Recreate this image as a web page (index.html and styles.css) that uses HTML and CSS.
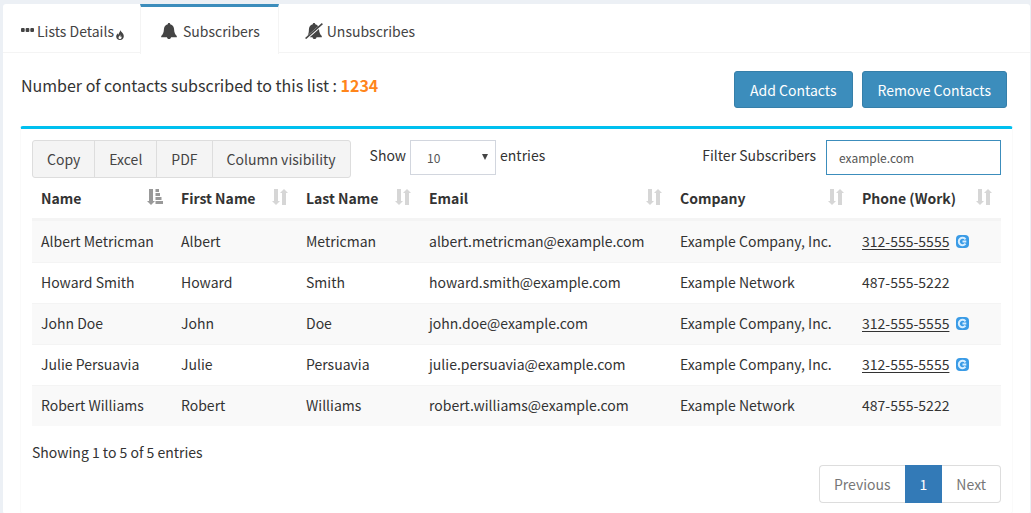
FILE: index.html
```
<!DOCTYPE html>
<html lang="en">
<head>
    <meta charset="utf-8">
    <title>Subscribers</title>
    <link rel="stylesheet" href="styles.css">
</head>
<body>
    <!-- Shared icons -->
    <svg class="sprite" aria-hidden="true">
        <symbol id="sort" viewBox="0 0 16 16">
            <path d="M2 0h4v12h2l-4 4-4-4h2zM10 16V4H8l4-4 4 4h-2v12z"/>
        </symbol>
        <symbol id="sort-asc" viewBox="0 0 16 16">
            <path d="M2 0h4v12h2l-4 4-4-4h2zM8.500 0h3.500v3H8.500zM8.500 4H13v3H8.500zM8.500 8h6v3h-6zM8.500 12H16v3H8.500z"/>
        </symbol>
        <symbol id="call" viewBox="0 0 13 13">
            <rect width="13" height="13" rx="4" fill="#3a9be6"/>
            <path d="M9.500 4.300A3.700 3.700 0 1 0 9.500 8.700M10.300 6.500H6.500" fill="none" stroke="#d9efff" stroke-width="2"/>
        </symbol>
    </svg>

    <div class="nav-tabs-custom">
        <nav class="nav-tabs">
            <a href="#details" class="tab tab-details">
                <svg class="icon-dots" viewBox="0 0 13 4"><rect width="3.700" height="4" rx="1"/><rect x="4.650" width="3.700" height="4" rx="1"/><rect x="9.300" width="3.700" height="4" rx="1"/></svg>
                <span>Lists Details</span>
                <svg class="icon-fire" viewBox="0 0 8 10"><path d="M4.200 0c.2 1.600 3.600 3 3.600 6.200C7.800 8.500 6.200 10 4 10S.2 8.500.2 6.500c0-1.500.8-2.500 1.600-3.300 0 .8.100 1.200.5 1.500C2.600 3.300 4.200 2 4.200 0zM4.200 4.500C4 6 2.500 6.300 2.500 7.700c0 .8.600 1.300 1.500 1.300s1.600-.6 1.600-1.500c0-.5-.2-.9-.5-1.200l-.5.8c-.4-.7-.1-1.700-.4-2.600z" fill-rule="evenodd"/></svg>
            </a>
            <a href="#subscribers" class="tab active">
                <svg class="icon-bell" viewBox="0 0 16 16"><path d="M8 0c.8 0 1.200.6 1.200 1.200C12 1.700 13 4 13.100 6.500c.1 3 1 4.800 2.700 6.500v1.200H.2V13c1.700-1.700 2.600-3.500 2.700-6.500C3 4 4 1.700 6.800 1.200 6.800.6 7.200 0 8 0zM6 14.200h4c0 1.100-.9 1.800-2 1.800s-2-.7-2-1.800z"/></svg>
                <span>Subscribers</span>
            </a>
            <a href="#unsubscribes" class="tab tab-last">
                <svg class="icon-bell-off" viewBox="0 0 18 16"><path d="M9 0c.8 0 1.200.6 1.200 1.200 1.300.3 2.200 1 2.900 2L2.600 12.500C3.500 11 3.900 9 3.900 6.500 4 4 5 1.700 7.800 1.200 7.800.6 8.200 0 9 0zM14 5.900c.1 3.100 1 5.300 2.800 7.100v1.200H4.700zM7.500 14.200h4c0 1.100-.9 1.800-2 1.800s-2-.7-2-1.800z"/><path d="M.6 15.500 17.400.6" fill="none" stroke="currentColor" stroke-width="1.600"/></svg>
                <span>Unsubscribes</span>
            </a>
        </nav>

        <div class="tab-content">
            <div class="summary">
                <p class="count">Number of contacts subscribed to this list : <strong>1234</strong></p>
                <div class="actions">
                    <button type="button" class="btn btn-primary">Add Contacts</button>
                    <button type="button" class="btn btn-primary">Remove Contacts</button>
                </div>
            </div>

            <div class="box">
                <div class="toolbar">
                    <div class="btn-group">
                        <button type="button" class="btn btn-default">Copy</button>
                        <button type="button" class="btn btn-default">Excel</button>
                        <button type="button" class="btn btn-default">PDF</button>
                        <button type="button" class="btn btn-default">Column visibility</button>
                    </div>
                    <label class="length">
                        <span>Show</span>
                        <span class="select-wrap">
                            <select class="form-control">
                                <option>10</option>
                                <option>25</option>
                                <option>50</option>
                            </select>
                        </span>
                        <span>entries</span>
                    </label>
                    <label class="filter">
                        <span>Filter Subscribers</span>
                        <input type="text" class="form-control" value="example.com">
                    </label>
                </div>

                <table class="table">
                    <colgroup>
                        <col class="col-name">
                        <col class="col-first">
                        <col class="col-last">
                        <col>
                        <col class="col-company">
                        <col class="col-phone">
                    </colgroup>
                    <thead>
                        <tr>
                            <th><div class="head">Name <svg class="sort sorted"><use href="#sort-asc"/></svg></div></th>
                            <th><div class="head">First Name <svg class="sort"><use href="#sort"/></svg></div></th>
                            <th><div class="head">Last Name <svg class="sort"><use href="#sort"/></svg></div></th>
                            <th><div class="head">Email <svg class="sort"><use href="#sort"/></svg></div></th>
                            <th><div class="head">Company <svg class="sort"><use href="#sort"/></svg></div></th>
                            <th><div class="head">Phone (Work) <svg class="sort"><use href="#sort"/></svg></div></th>
                        </tr>
                    </thead>
                    <tbody>
                        <tr>
                            <td>Albert Metricman</td>
                            <td>Albert</td>
                            <td>Metricman</td>
                            <td>albert.metricman@example.com</td>
                            <td>Example Company, Inc.</td>
                            <td><a href="tel:3125555555">312-555-5555</a><svg class="call"><use href="#call"/></svg></td>
                        </tr>
                        <tr>
                            <td>Howard Smith</td>
                            <td>Howard</td>
                            <td>Smith</td>
                            <td>howard.smith@example.com</td>
                            <td>Example Network</td>
                            <td>487-555-5222</td>
                        </tr>
                        <tr>
                            <td>John Doe</td>
                            <td>John</td>
                            <td>Doe</td>
                            <td>john.doe@example.com</td>
                            <td>Example Company, Inc.</td>
                            <td><a href="tel:3125555555">312-555-5555</a><svg class="call"><use href="#call"/></svg></td>
                        </tr>
                        <tr>
                            <td>Julie Persuavia</td>
                            <td>Julie</td>
                            <td>Persuavia</td>
                            <td>julie.persuavia@example.com</td>
                            <td>Example Company, Inc.</td>
                            <td><a href="tel:3125555555">312-555-5555</a><svg class="call"><use href="#call"/></svg></td>
                        </tr>
                        <tr>
                            <td>Robert Williams</td>
                            <td>Robert</td>
                            <td>Williams</td>
                            <td>robert.williams@example.com</td>
                            <td>Example Network</td>
                            <td>487-555-5222</td>
                        </tr>
                    </tbody>
                </table>

                <p class="info">Showing 1 to 5 of 5 entries</p>
                <nav class="pagination">
                    <a href="#prev">Previous</a>
                    <a href="#1" class="current">1</a>
                    <a href="#next">Next</a>
                </nav>
            </div>
        </div>
    </div>
</body>
</html>
```

FILE: styles.css
```
* {
    box-sizing: border-box;
}
body {
    margin: 0;
    padding: 4px 1px 0 3px;
    background: #ecf0f5;
    color: #333;
    font-family: "Noto Sans CJK SC", "Noto Sans", sans-serif;
    font-size: 14px;
    line-height: 24px;
}
p {
    margin: 0;
}
svg {
    flex: none;
    fill: currentColor;
}
.sprite {
    display: none;
}
button, input, select {
    font-family: inherit;
}

/* Tabs */
.nav-tabs-custom {
    min-height: calc(100vh - 4px);
    background: #fff;
    border-radius: 3px;
}
.nav-tabs {
    display: flex;
    height: 49px;
    border-bottom: 1px solid #f4f4f4;
}
.tab {
    display: flex;
    align-items: center;
    gap: 6px;
    height: 50px;
    padding: 1px 18px 0 20px;
    border-top: 3px solid transparent;
    color: #444;
    text-decoration: none;
}
.tab.active {
    background: #fff;
    border: solid #f4f4f4;
    border-width: 3px 1px 0;
    border-top-color: #3c8dbc;
}
.tab-details {
    gap: 3px;
    padding: 1px 16px 0 18px;
}
.tab-last {
    gap: 4px;
    padding-left: 26px;
}
.icon-dots {
    width: 13px;
    height: 4px;
    margin-bottom: 2px;
}
.icon-fire {
    width: 8px;
    height: 10px;
    margin: 8px 0 0 -1px;
}
.icon-bell {
    width: 16px;
    height: 16px;
}
.icon-bell-off {
    width: 18px;
    height: 16px;
}

/* Summary line */
.tab-content {
    padding: 18px 17px 0;
}
.summary {
    display: flex;
    justify-content: space-between;
    padding: 0 6px 18px 1px;
}
.count {
    padding-top: 2px;
    font-size: 16px;
}
.count strong {
    color: #ff851b;
}
.actions {
    display: flex;
    gap: 9px;
}
.btn {
    height: 38px;
    padding: 0 14px;
    border: 1px solid #ddd;
    border-radius: 3px;
    font-size: 14px;
    line-height: 24px;
    cursor: pointer;
}
.btn-primary {
    height: 37px;
    padding: 0 15px;
    background: #3c8dbc;
    border-color: #367fa9;
    color: #fff;
}
.btn-default {
    background: #f4f4f4;
    color: #444;
}

/* Data table */
.box {
    padding: 11px 11px 10px;
    border: 1px solid #fafafa;
    border-top: 3px solid #00c0ef;
    border-radius: 3px;
}
.toolbar {
    display: flex;
    align-items: flex-start;
}
.btn-group {
    display: flex;
}
.btn-group .btn {
    border-radius: 0;
}
.btn-group .btn + .btn {
    margin-left: -1px;
}
.btn-group .btn:first-child {
    border-radius: 3px 0 0 3px;
}
.btn-group .btn:last-child {
    border-radius: 0 3px 3px 0;
}
.length, .filter {
    display: flex;
    align-items: flex-start;
    gap: 4px;
    line-height: 30px;
}
.length {
    margin-left: 19px;
}
.filter {
    gap: 10px;
    margin-left: auto;
}
.form-control {
    height: 35px;
    border: 1px solid #d2d6de;
    border-radius: 0;
    background: #fff;
    color: #555;
    font-size: 12px;
}
select.form-control {
    width: 86px;
    padding: 0 16px;
    appearance: none;
}
input.form-control {
    width: 175px;
    padding: 0 12px;
    border-color: #3c8dbc;
    outline: none;
}
.select-wrap {
    position: relative;
}
.select-wrap::after {
    content: "";
    position: absolute;
    top: 14px;
    right: 8px;
    border: solid transparent;
    border-width: 6px 3px 0;
    border-top-color: #444;
    pointer-events: none;
}
.table {
    width: 100%;
    table-layout: fixed;
    border-collapse: separate;
    border-spacing: 0;
}
.col-name { width: 140px; }
.col-first { width: 125px; }
.col-last { width: 123px; }
.col-company { width: 182px; }
.col-phone { width: 148px; }
.table th {
    height: 43px;
    padding: 0 9px;
    border-bottom: 3px solid #f4f4f4;
    text-align: left;
}
.table td {
    height: 41px;
    padding: 0 9px 2px;
    border-top: 1px solid #f4f4f4;
    white-space: nowrap;
}
.table tbody tr:first-child td {
    border-top-color: #f9f9f9;
}
.table tbody tr:nth-child(odd) {
    background: #f9f9f9;
}
.table td a {
    color: #333;
    text-underline-offset: 2px;
}
.head {
    display: flex;
    align-items: center;
    justify-content: space-between;
    white-space: nowrap;
}
.sort {
    width: 16px;
    height: 16px;
    margin-bottom: 2px;
    color: #d6d6d6;
}
.sorted {
    color: #999;
}
.call {
    width: 13px;
    height: 13px;
    margin-left: 7px;
    vertical-align: -1px;
}
.info {
    padding-top: 14px;
}
.pagination {
    display: flex;
    justify-content: flex-end;
    padding-top: 1px;
}
.pagination a {
    height: 38px;
    padding: 6px 14px;
    background: #fff;
    border: 1px solid #ddd;
    color: #777;
    text-decoration: none;
}
.pagination a:first-child {
    border-right: 0;
    border-radius: 4px 0 0 4px;
}
.pagination a:last-child {
    border-left: 0;
    border-radius: 0 4px 4px 0;
}
.pagination .current {
    background: #337ab7;
    border-color: #337ab7;
    color: #fff;
}
```
